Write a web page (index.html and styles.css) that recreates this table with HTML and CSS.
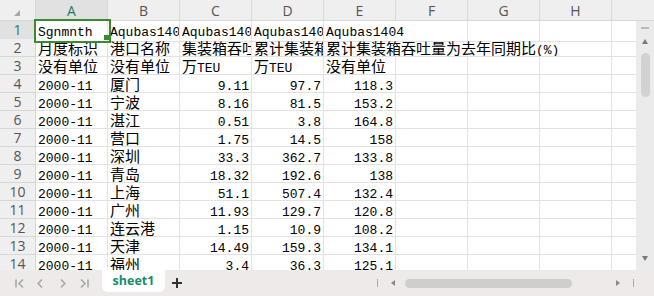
FILE: index.html
```html
<!DOCTYPE html>
<html lang="zh">
<head>
<meta charset="utf-8">
<title>sheet1</title>
<link rel="stylesheet" href="styles.css">
</head>
<body>
<div class="app">
  <div class="sheet">
    <div class="colhead">
      <div class="corner"></div>
      <div class="hc sel">A</div>
      <div class="hc">B</div>
      <div class="hc">C</div>
      <div class="hc">D</div>
      <div class="hc">E</div>
      <div class="hc">F</div>
      <div class="hc">G</div>
      <div class="hc">H</div>
      <div class="hc part"></div>
      <div class="hc sbar"></div>
    </div>
    <div class="body">
      <div class="grid">
        <div class="row"><div class="rh sel">1</div><div class="c a1">Sgnmnth</div><div class="c">Aqubas1401</div><div class="c">Aqubas1402</div><div class="c">Aqubas1403</div><div class="c span2">Aqubas1404</div><div class="c"></div><div class="c"></div><div class="c last"></div></div>
        <div class="row"><div class="rh">2</div><div class="c"><span class="cj">月度标识</span></div><div class="c"><span class="cj">港口名称</span></div><div class="c"><span class="cj">集装箱吞吐量</span></div><div class="c"><span class="cj">累计集装箱吞吐量</span></div><div class="c span4"><span class="cj">累计集装箱吞吐量为去年同期比</span>(%)</div><div class="c last"></div></div>
        <div class="row"><div class="rh">3</div><div class="c"><span class="cj">没有单位</span></div><div class="c"><span class="cj">没有单位</span></div><div class="c"><span class="cj">万</span>TEU</div><div class="c"><span class="cj">万</span>TEU</div><div class="c"><span class="cj">没有单位</span></div><div class="c"></div><div class="c"></div><div class="c"></div><div class="c last"></div></div>
        <div class="row"><div class="rh">4</div><div class="c">2000-11</div><div class="c"><span class="cj">厦门</span></div><div class="c n">9.11</div><div class="c n">97.7</div><div class="c n">118.3</div><div class="c"></div><div class="c"></div><div class="c"></div><div class="c last"></div></div>
        <div class="row"><div class="rh">5</div><div class="c">2000-11</div><div class="c"><span class="cj">宁波</span></div><div class="c n">8.16</div><div class="c n">81.5</div><div class="c n">153.2</div><div class="c"></div><div class="c"></div><div class="c"></div><div class="c last"></div></div>
        <div class="row"><div class="rh">6</div><div class="c">2000-11</div><div class="c"><span class="cj">湛江</span></div><div class="c n">0.51</div><div class="c n">3.8</div><div class="c n">164.8</div><div class="c"></div><div class="c"></div><div class="c"></div><div class="c last"></div></div>
        <div class="row"><div class="rh">7</div><div class="c">2000-11</div><div class="c"><span class="cj">营口</span></div><div class="c n">1.75</div><div class="c n">14.5</div><div class="c n">158</div><div class="c"></div><div class="c"></div><div class="c"></div><div class="c last"></div></div>
        <div class="row"><div class="rh">8</div><div class="c">2000-11</div><div class="c"><span class="cj">深圳</span></div><div class="c n">33.3</div><div class="c n">362.7</div><div class="c n">133.8</div><div class="c"></div><div class="c"></div><div class="c"></div><div class="c last"></div></div>
        <div class="row"><div class="rh">9</div><div class="c">2000-11</div><div class="c"><span class="cj">青岛</span></div><div class="c n">18.32</div><div class="c n">192.6</div><div class="c n">138</div><div class="c"></div><div class="c"></div><div class="c"></div><div class="c last"></div></div>
        <div class="row"><div class="rh">10</div><div class="c">2000-11</div><div class="c"><span class="cj">上海</span></div><div class="c n">51.1</div><div class="c n">507.4</div><div class="c n">132.4</div><div class="c"></div><div class="c"></div><div class="c"></div><div class="c last"></div></div>
        <div class="row"><div class="rh">11</div><div class="c">2000-11</div><div class="c"><span class="cj">广州</span></div><div class="c n">11.93</div><div class="c n">129.7</div><div class="c n">120.8</div><div class="c"></div><div class="c"></div><div class="c"></div><div class="c last"></div></div>
        <div class="row"><div class="rh">12</div><div class="c">2000-11</div><div class="c"><span class="cj">连云港</span></div><div class="c n">1.15</div><div class="c n">10.9</div><div class="c n">108.2</div><div class="c"></div><div class="c"></div><div class="c"></div><div class="c last"></div></div>
        <div class="row"><div class="rh">13</div><div class="c">2000-11</div><div class="c"><span class="cj">天津</span></div><div class="c n">14.49</div><div class="c n">159.3</div><div class="c n">134.1</div><div class="c"></div><div class="c"></div><div class="c"></div><div class="c last"></div></div>
        <div class="row"><div class="rh">14</div><div class="c">2000-11</div><div class="c"><span class="cj">福州</span></div><div class="c n">3.4</div><div class="c n">36.3</div><div class="c n">125.1</div><div class="c"></div><div class="c"></div><div class="c"></div><div class="c last"></div></div>
      </div>
      <div class="vs">
        <div class="vs-dash"></div>
        <div class="tri-up"></div>
        <div class="vs-thumb"></div>
        <div class="tri-down"></div>
      </div>
    </div>
  </div>
  <div class="tabbar">
    <div class="nav">
      <svg class="ic-first" width="9" height="9" viewBox="0 0 9 9"><path d="M1 0.5V8.5M8 0.5L4 4.5L8 8.5" fill="none" stroke="#a9a9a9" stroke-width="1.6"/></svg>
      <svg class="ic-prev" width="6" height="9" viewBox="0 0 6 9"><path d="M5 0.5L1.2 4.5L5 8.5" fill="none" stroke="#a9a9a9" stroke-width="1.6"/></svg>
      <svg class="ic-next" width="6" height="9" viewBox="0 0 6 9"><path d="M1 0.5L4.8 4.5L1 8.5" fill="none" stroke="#a9a9a9" stroke-width="1.6"/></svg>
      <svg class="ic-last" width="9" height="9" viewBox="0 0 9 9"><path d="M1 0.5L5 4.5L1 8.5M8 0.5V8.5" fill="none" stroke="#a9a9a9" stroke-width="1.6"/></svg>
    </div>
    <div class="tab">sheet1</div>
    <svg class="plus" width="10" height="10" viewBox="0 0 10 10"><path d="M5 0V10M0 5H10" stroke="#333" stroke-width="2"/></svg>
    <div class="hs">
      <div class="hs-bar"></div>
      <div class="tri-left"></div>
      <div class="hs-thumb"></div>
      <div class="tri-right"></div>
      <div class="hs-bar"></div>
    </div>
  </div>
</div>
</body>
</html>
```
FILE: styles.css
```css
* { box-sizing: border-box; margin: 0; padding: 0; }
body {
  margin: 0;
  width: 654px;
  height: 296px;
  overflow: hidden;
  background: #fff;
  font-family: "Liberation Mono", "Noto Sans CJK SC", monospace;
}
.app { display: flex; flex-direction: column; width: 654px; height: 296px; }
.sheet { height: 270px; overflow: hidden; display: flex; flex-direction: column; }

.colhead {
  display: flex;
  height: 21px;
  flex: none;
  background: #efefef;
  border-bottom: 1px solid #d7d7d7;
}
.corner { width: 36px; position: relative; border-right: 1px solid #d7d7d7; }
.corner::after {
  content: "";
  position: absolute;
  right: 15px;
  bottom: 4px;
  border-style: solid;
  border-width: 0 0 6px 6px;
  border-color: transparent transparent #a8a8a8 transparent;
}
.hc {
  width: 72px;
  border-right: 1px solid #d7d7d7;
  font: 14px "Open Sans", sans-serif;
  color: #555;
  display: flex;
  align-items: center;
  justify-content: center;
}
.hc.sel { background: #e1e1e1; color: #1f7b68; }
.hc.part { width: 24px; border-right: 0; }
.hc.sbar { width: 18px; border-right: 0; }

.body { display: flex; flex: 1; min-height: 0; }
.grid { width: 636px; flex: none; }
.row {
  display: grid;
  grid-template-columns: 36px repeat(8, 72px) 24px;
  height: 18px;
}
.rh {
  background: #efefef;
  border-right: 1px solid #d7d7d7;
  border-bottom: 1px solid #d7d7d7;
  font: 14px/17px "Open Sans", sans-serif;
  color: #555;
  text-align: center;
}
.rh.sel { background: #e1e1e1; color: #1f7b68; }
.c {
  border-right: 1px solid #e2e2e2;
  border-bottom: 1px solid #e2e2e2;
  padding: 3px 2px 0;
  font-size: 13px;
  line-height: 17px;
  white-space: nowrap;
  overflow: hidden;
  color: #000;
}
.c.n { text-align: right; }
.c.last { border-right: 0; }
.c.span2 { grid-column: span 2; }
.c.span4 { grid-column: span 4; }
.cj {
  font-family: "Noto Sans CJK SC", sans-serif;
  font-size: 15px;
  line-height: 0;
}
.c.a1 { position: relative; overflow: visible; }
.c.a1::after {
  content: "";
  position: absolute;
  left: -2px;
  top: -2px;
  width: 73px;
  height: 20px;
  border: 2px solid #3b8a2e;
}
.c.a1::before {
  content: "";
  position: absolute;
  left: 68px;
  top: 14px;
  width: 5px;
  height: 5px;
  background: #3b8a2e;
  z-index: 1;
}

.vs {
  width: 18px;
  flex: none;
  background: #ebebeb;
  display: flex;
  flex-direction: column;
  align-items: center;
  padding: 6px 0 9px;
}
.vs-dash { width: 8px; height: 2px; background: #b9b9b9; }
.tri-up {
  margin-top: 10px;
  border-style: solid;
  border-width: 0 3px 5px 3px;
  border-color: transparent transparent #7a7a7a transparent;
}
.vs-thumb { margin-top: 9px; width: 9px; height: 44px; border-radius: 5px; background: #d2d2d2; }
.tri-down {
  margin-top: auto;
  border-style: solid;
  border-width: 5px 3px 0 3px;
  border-color: #7a7a7a transparent transparent transparent;
}

.tabbar {
  display: flex;
  align-items: center;
  height: 26px;
  background: #eeeaea;
}
.nav { display: flex; align-items: center; padding-left: 15px; }
.ic-prev { margin-left: 13px; }
.ic-next { margin-left: 17px; }
.ic-last { margin-left: 14px; }
.tab {
  align-self: flex-start;
  margin-left: 13px;
  width: 63px;
  height: 22px;
  background: #fff;
  border-radius: 0 0 6px 6px;
  font: bold 12.5px/22px "Open Sans", sans-serif;
  color: #178b70;
  text-align: center;
}
.plus { margin-left: 7px; }
.hs {
  margin-left: auto;
  width: 277px;
  display: flex;
  align-items: center;
}
.hs-bar { width: 1px; height: 8px; background: #aaa; }
.tri-left {
  margin-left: 13px;
  border-style: solid;
  border-width: 3px 4px 3px 0;
  border-color: transparent #888 transparent transparent;
}
.hs-thumb { margin-left: 10px; width: 167px; height: 9px; border-radius: 5px; background: #d0cdcd; }
.tri-right {
  margin-left: 44px;
  border-style: solid;
  border-width: 3px 0 3px 4px;
  border-color: transparent transparent transparent #888;
}
.tri-right + .hs-bar { margin-left: 13px; }
```
